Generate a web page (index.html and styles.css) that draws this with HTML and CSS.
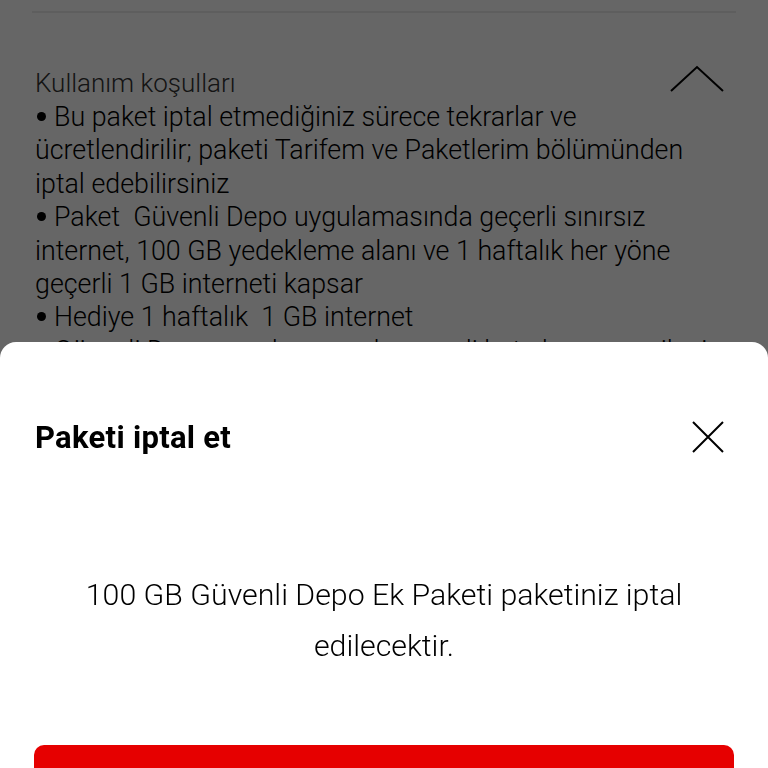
FILE: index.html
```html
<!DOCTYPE html>
<html lang="tr">
<head>
    <meta charset="UTF-8">
    <meta name="viewport" content="width=device-width, initial-scale=1.0">
    <title>Paketi iptal et</title>
    <link rel="stylesheet" href="styles.css">
</head>
<body>
    <div class="page">
        <hr class="divider">

        <!-- Terms accordion (open) -->
        <section class="terms">
            <div class="terms-head">
                <span class="terms-title">Kullanım koşulları</span>
                <svg class="chevron" width="54" height="28" viewBox="0 0 54 28">
                    <polyline points="1,26 27,2 53,26" fill="none" stroke="#000" stroke-width="2"/>
                </svg>
            </div>
            <p class="terms-line"><span class="dot"></span>Bu paket iptal etmediğiniz sürece tekrarlar ve<br>ücretlendirilir; paketi Tarifem ve Paketlerim bölümünden<br>iptal edebilirsiniz</p>
            <p class="terms-line"><span class="dot"></span>Paket&nbsp; Güvenli Depo uygulamasında geçerli sınırsız<br>internet, 100 GB yedekleme alanı ve 1 haftalık her yöne<br>geçerli 1 GB interneti kapsar</p>
            <p class="terms-line"><span class="dot"></span>Hediye 1 haftalık&nbsp; 1 GB internet</p>
            <p class="terms-line"><span class="dot"></span>Güvenli Depo uygulamasında geçerli kota her ay yenilenir</p>
        </section>
    </div>

    <!-- Dim overlay + bottom sheet -->
    <div class="overlay"></div>
    <div class="sheet">
        <div class="sheet-head">
            <h2>Paketi iptal et</h2>
            <svg class="close" width="32" height="32" viewBox="0 0 32 32">
                <path d="M1 1 L31 31 M31 1 L1 31" stroke="#000" stroke-width="2" fill="none"/>
            </svg>
        </div>
        <p class="sheet-msg">100 GB Güvenli Depo Ek Paketi paketiniz iptal<br>edilecektir.</p>
        <button class="btn-primary" type="button" aria-label="İptal et"></button>
    </div>
</body>
</html>
```
FILE: styles.css
```css
body {
    margin: 0;
    font-family: Roboto, "Open Sans", sans-serif;
    font-weight: 300;
    color: #1a1a1a;
    background-color: #fff;
    overflow: hidden;
    height: 768px;
}

.page {
    padding: 0 32px;
}

.divider {
    margin: 11px 0 0;
    border: none;
    border-top: 2px solid #ebebeb;
}

.terms {
    padding: 51px 3px 0;
}

.terms-head {
    display: flex;
    justify-content: space-between;
    align-items: center;
    height: 37px;
    padding-right: 9px;
}

.terms-title {
    font-size: 26px;
    color: #333;
}

.chevron {
    margin-top: -8px;
}

.terms-line {
    margin: 0;
    font-size: 26.8px;
    line-height: 33.4px;
    white-space: nowrap;
    color: #000;
}

.dot {
    display: inline-block;
    width: 9px;
    height: 9px;
    margin: 0 8px 0 2px;
    border-radius: 50%;
    background-color: #000;
    vertical-align: 0.2em;
}

/* Overlay dims everything below the sheet */
.overlay {
    position: fixed;
    inset: 0;
    background-color: rgba(0, 0, 0, 0.6);
}

.sheet {
    position: absolute;
    left: 0;
    right: 0;
    top: 342px;
    height: 426px;
    overflow: hidden;
    background-color: #fff;
    border-radius: 16px 16px 0 0;
    padding-top: 75px;
    box-sizing: border-box;
}

.sheet-head {
    display: flex;
    justify-content: space-between;
    align-items: center;
    height: 40px;
    padding: 0 44px 0 35px;
}

.sheet-head h2 {
    margin: 0;
    font-size: 31px;
    font-weight: 700;
    letter-spacing: 0.3px;
    color: #000;
}

.sheet-msg {
    margin: 112px 0 0;
    text-align: center;
    font-size: 30.3px;
    line-height: 51px;
    color: #000;
}

.btn-primary {
    display: block;
    margin: 74px 34px 0;
    width: calc(100% - 68px);
    height: 58px;
    border: none;
    border-radius: 10px;
    background-color: #e60000;
}
```
